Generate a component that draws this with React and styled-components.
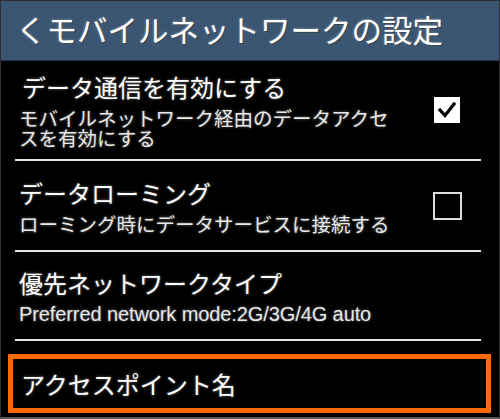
import React from "react";
import styled, { createGlobalStyle } from "styled-components";

const GlobalStyle = createGlobalStyle`
  html, body {
    margin: 0;
    padding: 0;
    background: #000;
  }
  body {
    font-family: "Noto Sans CJK JP", "Liberation Sans", sans-serif;
  }
`;

const rows = [
  {
    title: "データ通信を有効にする",
    sub: "モバイルネットワーク経由のデータアクセスを有効にする",
    check: true,
  },
  {
    title: "データローミング",
    sub: "ローミング時にデータサービスに接続する",
    check: false,
  },
  {
    title: "優先ネットワークタイプ",
    sub: "Preferred network mode:2G/3G/4G auto",
    latin: true,
  },
];

const App = () => {
  return (
    <Frame>
      <GlobalStyle />
      <Header>くモバイルネットワークの設定</Header>
      {rows.map((row, i) => (
        <React.Fragment key={i}>
          <Row $height={[98, 89, 87][i]}>
            <TextCol>
              <Title $indent={i === 0}>{row.title}</Title>
              <Sub $latin={row.latin}>{row.sub}</Sub>
            </TextCol>
            {row.check !== undefined && (
              <CheckBox $checked={row.check}>
                {row.check && (
                  <svg width="20" height="20" viewBox="0 0 20 20">
                    <polyline
                      points="3,10 8,15.5 17,4"
                      fill="none"
                      stroke="#000"
                      strokeWidth="3.2"
                      strokeLinecap="square"
                    />
                  </svg>
                )}
              </CheckBox>
            )}
          </Row>
          <Divider />
        </React.Fragment>
      ))}
      <Highlight>
        <Title>アクセスポイント名</Title>
      </Highlight>
    </Frame>
  );
};

export default App;

const Frame = styled.div`
  width: 500px;
  height: 419px;
  box-sizing: border-box;
  border: 1px solid #2e2e2e;
  border-bottom: 2px solid #5a5a5a;
  background: #000;
  overflow: hidden;
  display: flex;
  flex-direction: column;
`;

const Header = styled.div`
  height: 60px;
  flex-shrink: 0;
  background: #3b5672;
  border-bottom: 1px solid #23344a;
  display: flex;
  align-items: center;
  padding-left: 15px;
  padding-bottom: 3px;
  box-sizing: border-box;
  color: #fff;
  font-size: 30.5px;
  text-shadow: 0 0 3px rgba(255, 255, 255, 0.35), 1px 1px 1px rgba(0, 0, 0, 0.5);
`;

const Row = styled.div`
  height: ${(props) => props.$height}px;
  flex-shrink: 0;
  display: flex;
  align-items: center;
  justify-content: space-between;
  padding: 0 37px 0 18px;
  box-sizing: border-box;
`;

const TextCol = styled.div`
  display: flex;
  flex-direction: column;
  gap: 6px;
  color: #fff;
`;

const Title = styled.div`
  font-size: 24px;
  line-height: 30px;
  color: #fff;
  padding-left: ${(props) => (props.$indent ? "3px" : "0")};
  text-shadow: 0 0 3px rgba(255, 255, 255, 0.45);
`;

const Sub = styled.div`
  width: 385px;
  font-size: ${(props) => (props.$latin ? "20px" : "19.5px")};
  font-family: ${(props) =>
    props.$latin
      ? `"Liberation Sans", "Noto Sans CJK JP", sans-serif`
      : `"Noto Sans CJK JP", sans-serif`};
  letter-spacing: ${(props) => (props.$latin ? "-0.1px" : "0")};
  line-height: 20px;
  color: #e8e8e8;
  text-shadow: 0 0 3px rgba(255, 255, 255, 0.45);
`;

const CheckBox = styled.div`
  width: ${(props) => (props.$checked ? "26px" : "29px")};
  height: ${(props) => (props.$checked ? "26px" : "28px")};
  box-sizing: border-box;
  background: ${(props) => (props.$checked ? "#fff" : "transparent")};
  border: 2px solid ${(props) => (props.$checked ? "#fff" : "#dcdcdc")};
  display: flex;
  align-items: center;
  justify-content: center;
  margin-right: ${(props) => (props.$checked ? "2px" : "0")};
`;

const Divider = styled.div`
  height: 2px;
  flex-shrink: 0;
  margin: 0 18px 0 14px;
  background: #e4e4e4;
`;

const Highlight = styled.div`
  margin: 13px 8px 0 7px;
  height: 59px;
  box-sizing: border-box;
  border: 5px solid #ff6a00;
  display: flex;
  align-items: center;
  padding-left: 8px;
`;
